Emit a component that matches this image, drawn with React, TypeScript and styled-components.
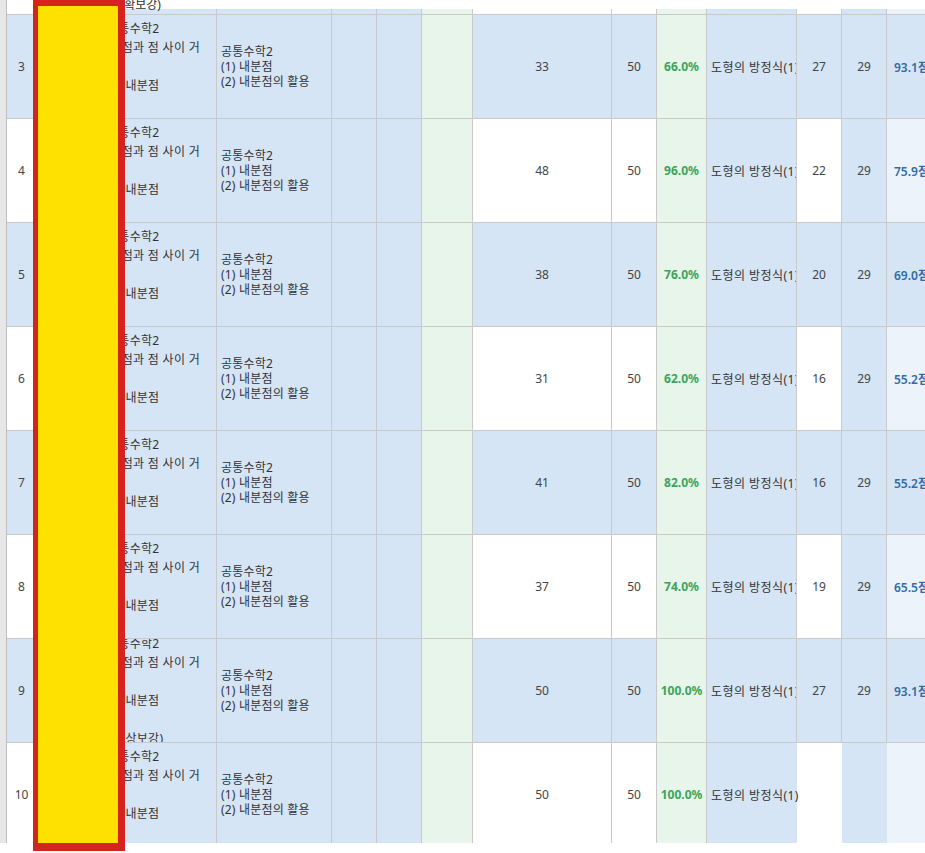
import React from "react";
import styled, { createGlobalStyle } from "styled-components";

const GlobalStyle = createGlobalStyle`
  html, body { margin: 0; padding: 0; background: #ffffff; }
  body {
    font-family: "Noto Sans", "Noto Sans CJK KR", sans-serif;
    font-size: 12px;
    color: #333333;
  }
`;

const BLUE = "#d6e5f5";
const GREEN = "#e7f5ea";
const LIGHT = "#edf3fb";
const BORDER = "#c9c9c9";

const COLS =
  "30px 68px 112px 115px 45px 45px 51px 139px 45px 50px 90px 45px 45px 60px";

const Page = styled.div`
  position: relative;
  width: 925px;
  height: 853px;
  overflow: hidden;
  background: #ffffff;
`;

const Frame = styled.div`
  display: flex;
  height: 843px;
`;

const Strip = styled.div`
  flex: 0 0 7px;
  box-sizing: border-box;
  background: #e7e7e7;
  border-right: 1px solid #bfbfbf;
`;

const Viewport = styled.div`
  flex: 1;
  overflow: hidden;
  display: flex;
  flex-direction: column;
`;

const TopBand = styled.div`
  flex: 0 0 9px;
  background: #ffffff;
`;

const Row = styled.div<{ $partial?: boolean }>`
  flex: 0 0 auto;
  display: grid;
  grid-template-columns: ${COLS};
  width: 940px;
  height: ${(p) => (p.$partial ? "5px" : "104px")};
  box-sizing: border-box;
  border-top: ${(p) => (p.$partial ? "none" : `1px solid ${BORDER}`)};
  background: #ffffff;
`;

const Cell = styled.div<{
  $bg?: string;
  $align?: "center" | "left";
  $noBorder?: boolean;
  $visible?: boolean;
}>`
  display: flex;
  align-items: center;
  justify-content: ${(p) => (p.$align === "left" ? "flex-start" : "center")};
  box-sizing: border-box;
  min-width: 0;
  background: ${(p) => p.$bg || "transparent"};
  border-right: ${(p) => (p.$noBorder ? "none" : `1px solid ${BORDER}`)};
  overflow: ${(p) => (p.$visible ? "visible" : "hidden")};
  white-space: nowrap;
`;

const StackCell = styled(Cell)`
  flex-direction: column;
  align-items: stretch;
  justify-content: center;
`;

const TopicLine = styled.div`
  flex: 0 0 19px;
  height: 19px;
  line-height: 19px;
  padding-left: 2px;
  white-space: nowrap;
  letter-spacing: 0.3px;
  color: #333333;
`;

const Fragment = styled.div`
  flex: 0 0 19px;
  height: 19px;
  line-height: 19px;
  padding-left: 2px;
  margin-top: -15px;
  white-space: nowrap;
  color: #333333;
`;

const UnitLine = styled.div`
  line-height: 15px;
  padding-left: 4px;
  white-space: nowrap;
  letter-spacing: 0.2px;
  color: #333333;
`;

const Num = styled.span`
  color: #444444;
`;

const Pct = styled.span`
  color: #3aa55a;
  font-weight: 700;
`;

const Chapter = styled.span`
  padding-left: 4px;
  letter-spacing: 0.45px;
  color: #333333;
`;

const Score = styled.span`
  padding-left: 7px;
  color: #2f6ca8;
  font-weight: 600;
`;

const Highlight = styled.div`
  position: absolute;
  left: 33px;
  top: 0;
  width: 92px;
  height: 851px;
  box-sizing: border-box;
  background: #ffe100;
  border-style: solid;
  border-color: #d5231d;
  border-width: 6px 7px 8px 5px;
`;

type RowData = {
  no: number;
  lines: string[];
  got: string;
  total: string;
  pct: string;
  chapter: string;
  got2: string;
  total2: string;
  score: string;
};

const baseLines = ["공통수학2", "두 점과 점 사이 거", "리", "(2) 내분점", ""];

const rows: RowData[] = [
  { no: 3, lines: baseLines, got: "33", total: "50", pct: "66.0%", chapter: "도형의 방정식(1)", got2: "27", total2: "29", score: "93.1점" },
  { no: 4, lines: baseLines, got: "48", total: "50", pct: "96.0%", chapter: "도형의 방정식(1)", got2: "22", total2: "29", score: "75.9점" },
  { no: 5, lines: baseLines, got: "38", total: "50", pct: "76.0%", chapter: "도형의 방정식(1)", got2: "20", total2: "29", score: "69.0점" },
  { no: 6, lines: baseLines, got: "31", total: "50", pct: "62.0%", chapter: "도형의 방정식(1)", got2: "16", total2: "29", score: "55.2점" },
  { no: 7, lines: baseLines, got: "41", total: "50", pct: "82.0%", chapter: "도형의 방정식(1)", got2: "16", total2: "29", score: "55.2점" },
  { no: 8, lines: baseLines, got: "37", total: "50", pct: "74.0%", chapter: "도형의 방정식(1)", got2: "19", total2: "29", score: "65.5점" },
  {
    no: 9,
    lines: ["공통수학2", "두 점과 점 사이 거", "리", "(2) 내분점", "", "(1) 상보강)"],
    got: "50", total: "50", pct: "100.0%", chapter: "도형의 방정식(1)", got2: "27", total2: "29", score: "93.1점",
  },
  { no: 10, lines: baseLines, got: "50", total: "50", pct: "100.0%", chapter: "도형의 방정식(1)", got2: "", total2: "", score: "" },
];

const units = ["공통수학2", "(1) 내분점", "(2) 내분점의 활용"];

function DataRow({ r, last }: { r: RowData; last: boolean }) {
  const hl = r.no % 2 === 1;
  const alt = hl ? BLUE : undefined;
  return (
    <Row>
      <Cell $bg={alt}>
        <Num>{r.no}</Num>
      </Cell>
      <Cell $bg={BLUE} />
      <StackCell $bg={BLUE}>
        {r.lines.map((l, i) => (
          <TopicLine key={i}>{l}</TopicLine>
        ))}
      </StackCell>
      <StackCell $bg={BLUE}>
        {units.map((u) => (
          <UnitLine key={u}>{u}</UnitLine>
        ))}
      </StackCell>
      <Cell $bg={BLUE} />
      <Cell $bg={BLUE} />
      <Cell $bg={GREEN} />
      <Cell $bg={alt}>
        <Num>{r.got}</Num>
      </Cell>
      <Cell $bg={alt}>
        <Num>{r.total}</Num>
      </Cell>
      <Cell $bg={GREEN}>
        <Pct>{r.pct}</Pct>
      </Cell>
      <Cell $bg={BLUE} $align="left" $noBorder={last} $visible={last}>
        <Chapter>{r.chapter}</Chapter>
      </Cell>
      <Cell $bg={alt} $noBorder={last}>
        <Num>{r.got2}</Num>
      </Cell>
      <Cell $bg={BLUE} $noBorder={last}>
        <Num>{r.total2}</Num>
      </Cell>
      <Cell $bg={hl ? BLUE : LIGHT} $align="left" $noBorder={last}>
        <Score>{r.score}</Score>
      </Cell>
    </Row>
  );
}

function PartialRow() {
  return (
    <Row $partial>
      <Cell />
      <Cell $bg={BLUE} />
      <StackCell $bg={BLUE} $visible>
        <Fragment>(1) 확보강)</Fragment>
      </StackCell>
      <Cell $bg={BLUE} />
      <Cell $bg={BLUE} />
      <Cell $bg={BLUE} />
      <Cell $bg={GREEN} />
      <Cell />
      <Cell />
      <Cell $bg={GREEN} />
      <Cell $bg={BLUE} />
      <Cell />
      <Cell $bg={BLUE} />
      <Cell $bg={LIGHT} />
    </Row>
  );
}

export default function App() {
  return (
    <>
      <GlobalStyle />
      <Page>
        <Frame>
          <Strip />
          <Viewport>
            <TopBand />
            <PartialRow />
            {rows.map((r, i) => (
              <DataRow key={r.no} r={r} last={i === rows.length - 1} />
            ))}
          </Viewport>
        </Frame>
        <Highlight />
      </Page>
    </>
  );
}
